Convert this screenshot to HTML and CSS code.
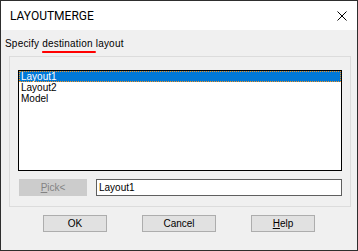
FILE: index.html
```html
<!DOCTYPE html>
<html lang="en">
<head>
    <meta charset="UTF-8">
    <title>LAYOUTMERGE</title>
    <link rel="stylesheet" href="styles.css">
</head>
<body>
    <div class="window">
        <div class="titlebar">
            <span class="title">LAYOUTMERGE</span>
            <svg class="close" width="10" height="10" viewBox="0 0 10 10">
                <path d="M0.5 0.5 L9.5 9.5 M9.5 0.5 L0.5 9.5" stroke="#000" stroke-width="1" fill="none"/>
            </svg>
        </div>

        <div class="prompt">Specify <span class="mark">destination </span>layout</div>

        <div class="group">
            <ul class="listbox">
                <li class="selected">Layout1</li>
                <li>Layout2</li>
                <li>Model</li>
            </ul>
            <div class="pick-row">
                <button class="btn pick" disabled><u>P</u>ick&lt;</button>
                <input class="name" type="text" value="Layout1">
            </div>
        </div>

        <div class="actions">
            <button class="btn ok">OK</button>
            <button class="btn cancel">Cancel</button>
            <button class="btn help"><u>H</u>elp</button>
        </div>
    </div>
</body>
</html>
```

FILE: styles.css
```css
/* base */
body { margin: 0; font-family: "Liberation Sans", Arial, sans-serif; font-size: 10px; color: #000; }

.window {
    width: 358px;
    height: 251px;
    box-sizing: border-box;
    border: 1px solid #2e2e2e;
    background: #f0f0f0;
    display: flex;
    flex-direction: column;
}

/* title bar */
.titlebar {
    height: 29px;
    background: #fff;
    display: flex;
    align-items: center;
    justify-content: space-between;
    padding: 0 10px 0 9px;
}

.title {
    font-family: Roboto, "Liberation Sans", sans-serif;
    font-size: 12px;
    color: #000;
}

.close { display: block; }

/* prompt text */
.prompt {
    height: 26px;
    display: flex;
    align-items: center;
    padding-left: 4px;
    white-space: pre;
    letter-spacing: 0.2px;
}

.mark {
    text-decoration: underline;
    text-decoration-color: #f00;
    text-decoration-thickness: 2px;
    text-underline-offset: 4px;
}

/* group box */
.group {
    height: 151px;
    box-sizing: border-box;
    margin: 0 6px 0 8px;
    border: 1px solid #dcdcdc;
    padding: 13px 8px 0 8px;
}

.listbox {
    list-style: none;
    margin: 0;
    padding: 0;
    height: 101px;
    box-sizing: border-box;
    border: 1px solid #000;
    background: #fff;
}

.listbox li {
    height: 11px;
    line-height: 11px;
    padding-left: 2px;
    white-space: nowrap;
}

.listbox li.selected {
    background: #0078d7;
    color: #fff;
    outline: 1px dotted #f7931e;
    outline-offset: -1px;
}

.pick-row {
    display: flex;
    margin-top: 8px;
    gap: 9px;
}

/* buttons */
.btn {
    font-family: "Liberation Sans", Arial, sans-serif;
    font-size: 10px;
    height: 17px;
    padding: 0;
    background: #e1e1e1;
    border: 1px solid #adadad;
    color: #000;
}

.btn.pick {
    width: 68px;
    margin-left: 1px;
    background: #cccccc;
    border-color: #cccccc;
    color: #838383;
}

.name {
    width: 246px;
    height: 17px;
    box-sizing: border-box;
    border: 1px solid #5f5f5f;
    padding: 0 2px;
    font-family: "Liberation Sans", Arial, sans-serif;
    font-size: 10px;
    outline: none;
}

.actions {
    display: flex;
    gap: 35px;
    padding-left: 42px;
    margin-top: 8px;
}

.btn.ok, .btn.help { width: 64px; }
.btn.cancel { width: 74px; }
```
